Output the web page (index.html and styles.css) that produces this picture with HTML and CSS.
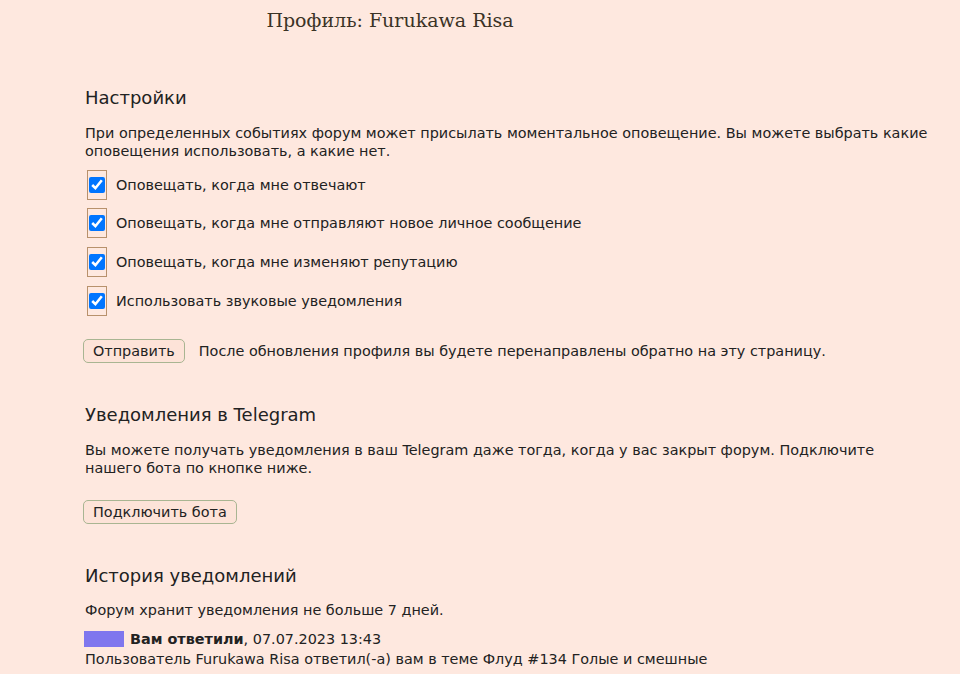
FILE: index.html
```html
<!DOCTYPE html>
<html lang="ru">

<head>
    <meta charset="UTF-8">
    <meta name="viewport" content="width=device-width, initial-scale=1.0">
    <title>Профиль: Furukawa Risa</title>
    <link rel="stylesheet" href="styles.css">
</head>

<body>
    <header class="page-head">
        <h1>Профиль: Furukawa Risa</h1>
    </header>

    <main class="profile">
        <section class="block">
            <h2>Настройки</h2>
            <p>При определенных событиях форум может присылать моментальное оповещение. Вы можете выбрать какие
                оповещения использовать, а какие нет.</p>
            <form class="notify-form">
                <label class="option">
                    <span class="check-box"><input type="checkbox" checked></span>
                    Оповещать, когда мне отвечают
                </label>
                <label class="option">
                    <span class="check-box"><input type="checkbox" checked></span>
                    Оповещать, когда мне отправляют новое личное сообщение
                </label>
                <label class="option">
                    <span class="check-box"><input type="checkbox" checked></span>
                    Оповещать, когда мне изменяют репутацию
                </label>
                <label class="option">
                    <span class="check-box"><input type="checkbox" checked></span>
                    Использовать звуковые уведомления
                </label>
                <div class="submit-row">
                    <button type="button" class="btn">Отправить</button>
                    <span>После обновления профиля вы будете перенаправлены обратно на эту страницу.</span>
                </div>
            </form>
        </section>

        <section class="block">
            <h2>Уведомления в Telegram</h2>
            <p>Вы можете получать уведомления в ваш Telegram даже тогда, когда у вас закрыт форум. Подключите<br>
                нашего бота по кнопке ниже.</p>
            <button type="button" class="btn">Подключить бота</button>
        </section>

        <section class="block history">
            <h2>История уведомлений</h2>
            <p>Форум хранит уведомления не больше 7 дней.</p>
            <div class="notice">
                <div class="notice-title"><span class="notice-mark"></span><b>Вам ответили</b>, 07.07.2023 13:43</div>
                <div>Пользователь Furukawa Risa ответил(-а) вам в теме Флуд #134 Голые и смешные</div>
            </div>
        </section>
    </main>
</body>

</html>
```

FILE: styles.css
```css
body {
    margin: 0;
    background-color: #fee8df;
    color: #222;
    font-family: "DejaVu Sans", Verdana, sans-serif;
    font-size: 14.4px;
    line-height: 18px;
}

.page-head {
    width: 780px;
    text-align: center;
}

.page-head h1 {
    margin: 0;
    padding-top: 8px;
    font-family: "DejaVu Serif", Georgia, serif;
    font-size: 19px;
    font-weight: normal;
    line-height: 24px;
    color: #3b3326;
}

.profile {
    width: 856px;
    padding: 54px 0 0 85px;
}

.block {
    margin-bottom: 40px;
}

.block h2 {
    margin: 0 0 14px;
    font-size: 18px;
    font-weight: normal;
    line-height: 24px;
}

.block p {
    margin: 0 0 10px;
}

.notify-form {
    display: flex;
    flex-direction: column;
    gap: 8px;
}

.option {
    display: flex;
    align-items: center;
    gap: 9px;
}

.check-box {
    display: flex;
    align-items: center;
    justify-content: center;
    width: 18px;
    height: 28px;
    margin-left: 2px;
    border: 1px solid #b8916c;
}

.check-box input {
    width: 16px;
    height: 16px;
    margin: 0;
}

.option + .option + .option {
    margin-top: 1px;
}

.submit-row {
    display: flex;
    align-items: center;
    gap: 14px;
    margin-top: 15px;
}

.btn {
    margin-left: -2px;
    padding: 2px 9px;
    border: 1px solid #a9b592;
    border-radius: 5px;
    background-color: #fde3d8;
    color: #222;
    font-family: inherit;
    font-size: 14.4px;
    line-height: 18px;
}

.block p + .btn {
    margin-top: 13px;
}

.history {
    margin-top: 39px;
}

.history h2 {
    margin-bottom: 13px;
}

.notice {
    line-height: 20px;
}

.notice-title {
    display: flex;
    align-items: center;
}

.notice-mark {
    width: 40px;
    height: 16px;
    margin-right: 6px;
    margin-left: -1px;
    background-color: #7f76ee;
}
```
